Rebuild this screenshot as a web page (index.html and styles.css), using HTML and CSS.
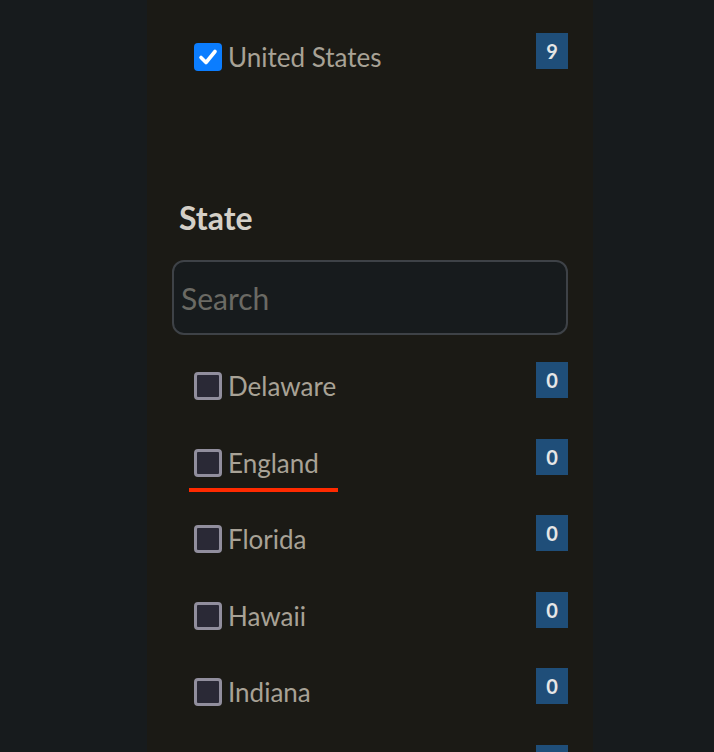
FILE: index.html
```html
<!DOCTYPE html>
<html>
<head>
<meta charset="utf-8">
<link rel="stylesheet" href="styles.css">
</head>
<body>
<div class="panel">
  <ul class="list list-top">
    <li class="row">
      <span class="box checked"><svg viewBox="0 0 28 28" width="28" height="28"><path d="M7 14.5 L12 19.5 L21 8.5" fill="none" stroke="#fff" stroke-width="3.6" stroke-linecap="round" stroke-linejoin="round"/></svg></span>
      <span class="label">United States</span>
      <span class="badge">9</span>
    </li>
  </ul>
  <h3 class="heading">State</h3>
  <input class="search" type="text" placeholder="Search">
  <ul class="list">
    <li class="row"><span class="box"></span><span class="label">Delaware</span><span class="badge">0</span></li>
    <li class="row"><span class="box"></span><span class="label underlined">England</span><span class="badge">0</span></li>
    <li class="row"><span class="box"></span><span class="label">Florida</span><span class="badge">0</span></li>
    <li class="row"><span class="box"></span><span class="label">Hawaii</span><span class="badge">0</span></li>
    <li class="row"><span class="box"></span><span class="label">Indiana</span><span class="badge">0</span></li>
    <li class="row"><span class="box"></span><span class="label">Iowa</span><span class="badge">0</span></li>
  </ul>
</div>
</body>
</html>
```
FILE: styles.css
```css
html, body {
  margin: 0;
  padding: 0;
  height: 100%;
  overflow: hidden;
}
body {
  background: #171b1d;
  font-family: "Lato", "Open Sans", sans-serif;
}
.panel {
  margin-left: 147px;
  width: 446px;
  height: 100%;
  background: #1b1a15;
  box-sizing: border-box;
  padding: 33px 25px 0 25px;
}
.list {
  list-style: none;
  margin: 0;
  padding: 0;
}
.row {
  display: flex;
  align-items: flex-start;
  height: 76.5px;
  padding-left: 22px;
}
.box {
  flex: none;
  width: 28px;
  height: 28px;
  margin-top: 10px;
  box-sizing: border-box;
  border: 3px solid #918e9d;
  border-radius: 4px;
  background: #2a2936;
}
.box.checked {
  border: none;
  background: #0b7dff;
}
.box svg { display: block; }
.label {
  margin-left: 6px;
  margin-top: 8px;
  font-size: 26px;
  line-height: 32px;
  color: #a8a296;
  position: relative;
}
.underlined::after {
  content: "";
  position: absolute;
  left: -39px;
  width: 149px;
  top: 41px;
  height: 4px;
  background: #ff2a00;
}
.badge {
  margin-left: auto;
  width: 32px;
  height: 36px;
  background: #1f4e79;
  color: #e6e6e6;
  font-weight: 700;
  font-size: 20px;
  line-height: 36px;
  text-align: center;
}
.list-top .row { height: 165px; }
.heading {
  margin: 2px 0 0 7px;
  font-size: 32px;
  line-height: 36px;
  font-weight: 700;
  color: #d4cfc7;
}
.search {
  display: block;
  margin-top: 24px;
  width: 396px;
  height: 75px;
  box-sizing: border-box;
  border: 2px solid #3e4247;
  border-radius: 12px;
  background: #171b1d;
  padding: 0 7px;
  font-family: inherit;
  font-size: 30px;
  color: #a8a296;
  margin-bottom: 27px;
  outline: none;
}
.search::placeholder {
  color: #6b6a64;
}
```
